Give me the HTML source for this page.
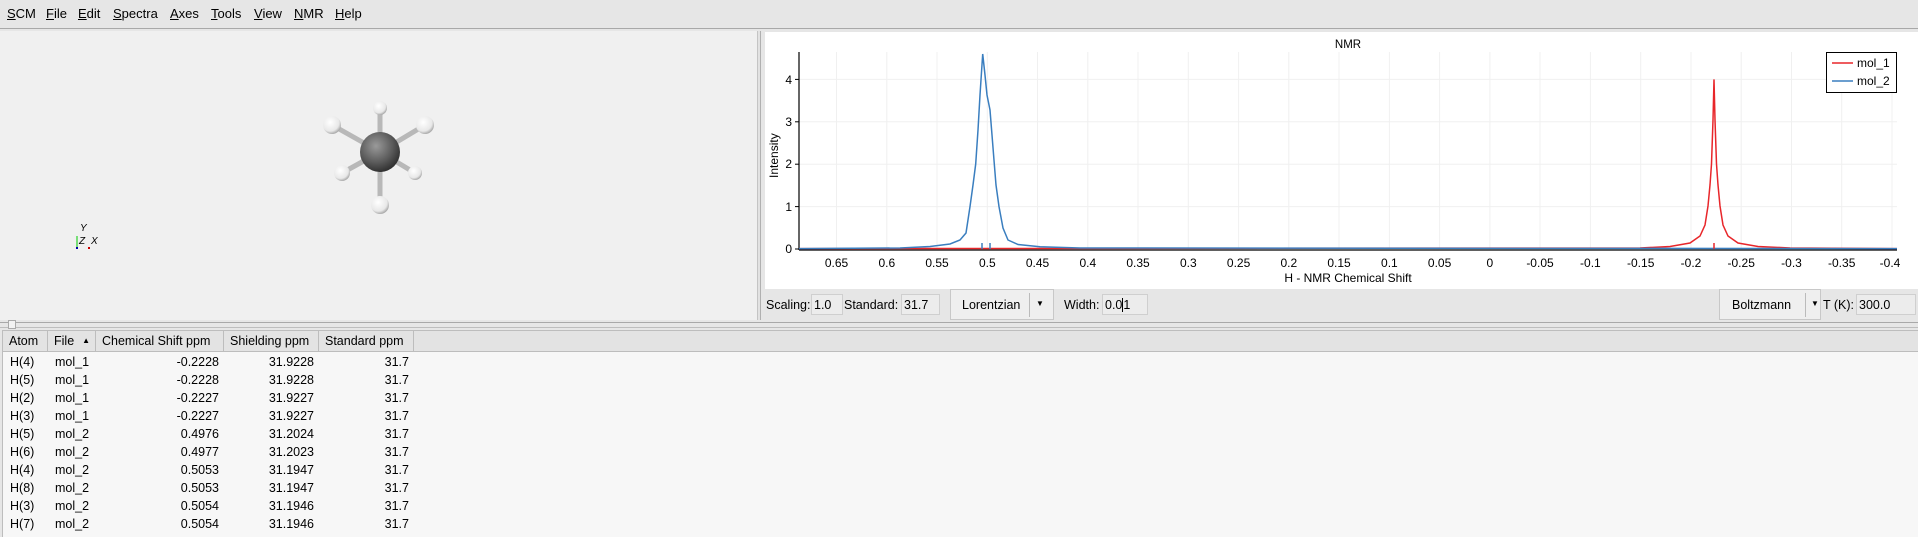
<!DOCTYPE html>
<html><head><meta charset="utf-8"><style>
*{box-sizing:border-box;margin:0;padding:0}
body{width:1918px;height:537px;overflow:hidden;background:#e6e6e6;font-family:"Liberation Sans","DejaVu Sans",sans-serif;font-size:12px;color:#000;position:relative}
.menu{position:absolute;left:0;top:0;width:1918px;height:29px;background:#e6e6e6;border-bottom:1px solid #a8a8a8}
.menu span{position:absolute;top:6px;font-size:13px}
.menu u{text-decoration:underline}
.left{position:absolute;left:0;top:31px;width:757px;height:289px;background:#f0f0f0}
.pl{position:absolute;left:760px;top:31px;width:1158px;height:289px;background:#e6e6e6;border-left:1px solid #b0b0b0}
.box{position:absolute;background:#ececec;border:1px solid #cfcfcf;height:21px;font-size:12.5px;padding:3px 2px}
.lbl{position:absolute;font-size:12.5px}
.combo{position:absolute;background:#efefef;border:1px solid #c8c8c8;height:31px;font-size:12.5px}
.tbl{position:absolute;left:2px;top:330px;width:1916px;height:207px;background:#f7f7f7;border-top:1px solid #bdbdbd;border-left:1px solid #bdbdbd}
.hd{position:absolute;top:0;height:21px;background:#e3e3e3;border-right:1px solid #bdbdbd;border-bottom:1px solid #bdbdbd;font-size:12.5px;padding:3px 6px;white-space:nowrap;overflow:hidden}
.row{position:absolute;left:0;height:18px;font-size:12.5px;width:420px}
.row span{position:absolute;top:2px}
.r{text-align:right}
</style></head><body>
<div class="menu">
<span style="left:7px"><u>S</u>CM</span>
<span style="left:46px"><u>F</u>ile</span>
<span style="left:78px"><u>E</u>dit</span>
<span style="left:113px"><u>S</u>pectra</span>
<span style="left:170px"><u>A</u>xes</span>
<span style="left:211px"><u>T</u>ools</span>
<span style="left:254px"><u>V</u>iew</span>
<span style="left:294px"><u>N</u>MR</span>
<span style="left:335px"><u>H</u>elp</span>
</div>
<div class="left">
<svg width="757" height="289" style="position:absolute;left:0;top:0">
<defs>
<radialGradient id="c" cx="0.4" cy="0.35" r="0.7"><stop offset="0" stop-color="#9a9a9a"/><stop offset="0.6" stop-color="#5a5a5a"/><stop offset="1" stop-color="#2a2a2a"/></radialGradient>
<radialGradient id="h" cx="0.4" cy="0.35" r="0.7"><stop offset="0" stop-color="#ffffff"/><stop offset="0.7" stop-color="#e8e8e8"/><stop offset="1" stop-color="#9a9a9a"/></radialGradient>
</defs>
<g stroke="#b8b8b8" stroke-width="5" stroke-linecap="round">
<line x1="380" y1="121" x2="380" y2="77"/><line x1="380" y1="121" x2="332" y2="94"/><line x1="380" y1="121" x2="425" y2="94"/>
<line x1="380" y1="121" x2="342" y2="142"/><line x1="380" y1="121" x2="415" y2="142"/><line x1="380" y1="121" x2="380" y2="174"/>
</g>
<circle cx="380" cy="77" r="7" fill="url(#h)"/>
<circle cx="332" cy="94" r="9" fill="url(#h)"/>
<circle cx="425" cy="94" r="9" fill="url(#h)"/>
<circle cx="380" cy="121" r="20" fill="url(#c)"/>
<circle cx="342" cy="142" r="8" fill="url(#h)"/>
<circle cx="415" cy="142" r="7" fill="url(#h)"/>
<circle cx="380" cy="174" r="9" fill="url(#h)"/>
<line x1="77" y1="205" x2="77" y2="217" stroke="#0c0" stroke-width="1"/>
<rect x="76" y="216" width="2" height="2" fill="#00a"/><rect x="88" y="216" width="2" height="2" fill="#c00"/>
<text x="80" y="200" font-size="10" font-style="italic" font-family="Liberation Sans">Y</text>
<text x="79" y="213" font-size="10" font-style="italic" font-family="Liberation Sans">Z</text>
<text x="91" y="213" font-size="10" font-style="italic" font-family="Liberation Sans">X</text>
</svg>
</div>
<div style="position:absolute;left:757px;top:31px;width:3px;height:289px;background:#e2e2e2;border-left:1px solid #c4c4c4"></div>
<div class="pl">
<svg width="1157" height="258" style="position:absolute;left:4px;top:1px" viewBox="765 32 1157 258">
<rect x="765" y="32" width="1153" height="257" fill="#fff"/>
<g stroke="#f0f0f0" stroke-width="1">
<line x1="836.5" y1="52" x2="836.5" y2="249"/><line x1="886.8" y1="52" x2="886.8" y2="249"/><line x1="937" y1="52" x2="937" y2="249"/><line x1="987.3" y1="52" x2="987.3" y2="249"/><line x1="1037.5" y1="52" x2="1037.5" y2="249"/><line x1="1087.8" y1="52" x2="1087.8" y2="249"/><line x1="1138" y1="52" x2="1138" y2="249"/><line x1="1188.3" y1="52" x2="1188.3" y2="249"/><line x1="1238.6" y1="52" x2="1238.6" y2="249"/><line x1="1288.8" y1="52" x2="1288.8" y2="249"/><line x1="1339" y1="52" x2="1339" y2="249"/><line x1="1389.4" y1="52" x2="1389.4" y2="249"/><line x1="1439.6" y1="52" x2="1439.6" y2="249"/><line x1="1489.9" y1="52" x2="1489.9" y2="249"/><line x1="1540" y1="52" x2="1540" y2="249"/><line x1="1590.4" y1="52" x2="1590.4" y2="249"/><line x1="1640.7" y1="52" x2="1640.7" y2="249"/><line x1="1691" y1="52" x2="1691" y2="249"/><line x1="1741.2" y1="52" x2="1741.2" y2="249"/><line x1="1791.5" y1="52" x2="1791.5" y2="249"/><line x1="1841.7" y1="52" x2="1841.7" y2="249"/><line x1="1892" y1="52" x2="1892" y2="249"/>
<line x1="799" y1="206.6" x2="1897" y2="206.6"/><line x1="799" y1="164.2" x2="1897" y2="164.2"/><line x1="799" y1="121.8" x2="1897" y2="121.8"/><line x1="799" y1="79.4" x2="1897" y2="79.4"/>
</g>
<line x1="799" y1="52" x2="799" y2="250" stroke="#000" stroke-width="1.2"/>
<line x1="799" y1="250" x2="1897" y2="250" stroke="#000" stroke-width="1.2"/>
<g stroke="#000"><line x1="795" y1="249" x2="799" y2="249"/><line x1="795" y1="206.6" x2="799" y2="206.6"/><line x1="795" y1="164.2" x2="799" y2="164.2"/><line x1="795" y1="121.8" x2="799" y2="121.8"/><line x1="795" y1="79.4" x2="799" y2="79.4"/></g>
<g font-size="12" font-family="Liberation Sans" text-anchor="end"><text x="792" y="253">0</text><text x="792" y="211">1</text><text x="792" y="168">2</text><text x="792" y="126">3</text><text x="792" y="84">4</text></g>
<text x="0" y="0" font-size="12" font-family="Liberation Sans" transform="translate(778,178) rotate(-90)">Intensity</text>
<text x="1348" y="48" font-size="11.5" font-family="Liberation Sans" text-anchor="middle">NMR</text>
<g font-size="12" font-family="Liberation Sans" text-anchor="middle">
<text x="836.5" y="267">0.65</text><text x="886.8" y="267">0.6</text><text x="937" y="267">0.55</text><text x="987.3" y="267">0.5</text><text x="1037.5" y="267">0.45</text><text x="1087.8" y="267">0.4</text><text x="1138" y="267">0.35</text><text x="1188.3" y="267">0.3</text><text x="1238.6" y="267">0.25</text><text x="1288.8" y="267">0.2</text><text x="1339" y="267">0.15</text><text x="1389.4" y="267">0.1</text><text x="1439.6" y="267">0.05</text><text x="1489.9" y="267">0</text><text x="1540" y="267">-0.05</text><text x="1590.4" y="267">-0.1</text><text x="1640.7" y="267">-0.15</text><text x="1691" y="267">-0.2</text><text x="1741.2" y="267">-0.25</text><text x="1791.5" y="267">-0.3</text><text x="1841.7" y="267">-0.35</text><text x="1890" y="267">-0.4</text>
</g>
<text x="1348" y="282" font-size="12" font-family="Liberation Sans" text-anchor="middle">H - NMR Chemical Shift</text>
<path d="M799,248.6 L1640,248 L1670,246.5 L1690,243 L1700,236 L1705,225 L1708,206 L1710,185 L1711.5,164 L1713,120 L1714,79.4 L1715,120 L1716.5,164 L1718,185 L1720,206 L1723,225 L1728,236 L1738,243 L1758,246.5 L1790,248 L1897,248.6" fill="none" stroke="#e8262a" stroke-width="1.5"/>
<path d="M799,248.6 L900,248 L930,246.5 L950,244 L960,240 L966,233 L970,206.6 L973,185 L975.7,164 L978,130 L980,95 L982.7,54 L985,75 L987,95 L990,110 L992,135 L994.3,164 L996,185 L999,206.6 L1003,228 L1008,240 L1018,244.5 L1040,246.8 L1080,248 L1897,248.6" fill="none" stroke="#3a7ebf" stroke-width="1.5"/>
<g stroke-width="1.5"><line x1="982" y1="243" x2="982" y2="249" stroke="#3a7ebf"/><line x1="990" y1="243" x2="990" y2="249" stroke="#3a7ebf"/><line x1="1714" y1="243" x2="1714" y2="249" stroke="#e8262a"/></g>
<rect x="1826.5" y="52.5" width="70" height="40" fill="#fff" stroke="#000"/>
<line x1="1832" y1="63" x2="1853" y2="63" stroke="#e8262a" stroke-width="1.5"/>
<line x1="1832" y1="81" x2="1853" y2="81" stroke="#3a7ebf" stroke-width="1.5"/>
<text x="1857" y="67" font-size="12" font-family="Liberation Sans">mol_1</text>
<text x="1857" y="85" font-size="12" font-family="Liberation Sans">mol_2</text>
</svg>
</div>
<span class="lbl" style="left:766px;top:298px">Scaling:</span>
<div class="box" style="left:811px;top:294px;width:32px">1.0</div>
<span class="lbl" style="left:844px;top:298px">Standard:</span>
<div class="box" style="left:901px;top:294px;width:39px">31.7</div>
<div class="combo" style="left:950px;top:289px;width:104px"><span style="position:absolute;left:11px;top:8px">Lorentzian</span><span style="position:absolute;left:78px;top:3px;height:24px;border-left:1px solid #bbb"></span><span style="position:absolute;left:85px;top:9px;font-size:8px">▼</span></div>
<span class="lbl" style="left:1064px;top:298px">Width:</span>
<div class="box" style="left:1102px;top:294px;width:46px">0.0<span style="border-left:1px solid #000"></span>1</div>
<div class="combo" style="left:1719px;top:289px;width:102px"><span style="position:absolute;left:12px;top:8px">Boltzmann</span><span style="position:absolute;left:85px;top:3px;height:24px;border-left:1px solid #bbb"></span><span style="position:absolute;left:91px;top:9px;font-size:8px">▼</span></div>
<span class="lbl" style="left:1823px;top:298px">T (K):</span>
<div class="box" style="left:1856px;top:294px;width:60px">300.0</div>
<div style="position:absolute;left:0;top:322px;width:1918px;height:1px;background:#a8a8a8"></div>
<div style="position:absolute;left:0;top:327px;width:1918px;height:1px;background:#bdbdbd"></div>
<div style="position:absolute;left:8px;top:320px;width:8px;height:9px;background:#f2f2f2;border:1px solid #aaa"></div>
<div class="tbl">
<div class="hd" style="left:0;width:45px">Atom</div>
<div class="hd" style="left:45px;width:48px">File<span style="font-size:8px;margin-left:8px;vertical-align:2px">▲</span></div>
<div class="hd" style="left:93px;width:128px">Chemical Shift ppm</div>
<div class="hd" style="left:221px;width:95px">Shielding ppm</div>
<div class="hd" style="left:316px;width:95px">Standard ppm</div>
<div class="hd" style="left:411px;width:1505px;border-right:none"></div>
<div class="row" style="top:22px"><span style="left:7px">H(4)</span><span style="left:52px">mol_1</span><span class="r" style="right:204px">-0.2228</span><span class="r" style="right:109px">31.9228</span><span class="r" style="right:14px">31.7</span></div>
<div class="row" style="top:40px"><span style="left:7px">H(5)</span><span style="left:52px">mol_1</span><span class="r" style="right:204px">-0.2228</span><span class="r" style="right:109px">31.9228</span><span class="r" style="right:14px">31.7</span></div>
<div class="row" style="top:58px"><span style="left:7px">H(2)</span><span style="left:52px">mol_1</span><span class="r" style="right:204px">-0.2227</span><span class="r" style="right:109px">31.9227</span><span class="r" style="right:14px">31.7</span></div>
<div class="row" style="top:76px"><span style="left:7px">H(3)</span><span style="left:52px">mol_1</span><span class="r" style="right:204px">-0.2227</span><span class="r" style="right:109px">31.9227</span><span class="r" style="right:14px">31.7</span></div>
<div class="row" style="top:94px"><span style="left:7px">H(5)</span><span style="left:52px">mol_2</span><span class="r" style="right:204px">0.4976</span><span class="r" style="right:109px">31.2024</span><span class="r" style="right:14px">31.7</span></div>
<div class="row" style="top:112px"><span style="left:7px">H(6)</span><span style="left:52px">mol_2</span><span class="r" style="right:204px">0.4977</span><span class="r" style="right:109px">31.2023</span><span class="r" style="right:14px">31.7</span></div>
<div class="row" style="top:130px"><span style="left:7px">H(4)</span><span style="left:52px">mol_2</span><span class="r" style="right:204px">0.5053</span><span class="r" style="right:109px">31.1947</span><span class="r" style="right:14px">31.7</span></div>
<div class="row" style="top:148px"><span style="left:7px">H(8)</span><span style="left:52px">mol_2</span><span class="r" style="right:204px">0.5053</span><span class="r" style="right:109px">31.1947</span><span class="r" style="right:14px">31.7</span></div>
<div class="row" style="top:166px"><span style="left:7px">H(3)</span><span style="left:52px">mol_2</span><span class="r" style="right:204px">0.5054</span><span class="r" style="right:109px">31.1946</span><span class="r" style="right:14px">31.7</span></div>
<div class="row" style="top:184px"><span style="left:7px">H(7)</span><span style="left:52px">mol_2</span><span class="r" style="right:204px">0.5054</span><span class="r" style="right:109px">31.1946</span><span class="r" style="right:14px">31.7</span></div>
</div>
</body></html>
